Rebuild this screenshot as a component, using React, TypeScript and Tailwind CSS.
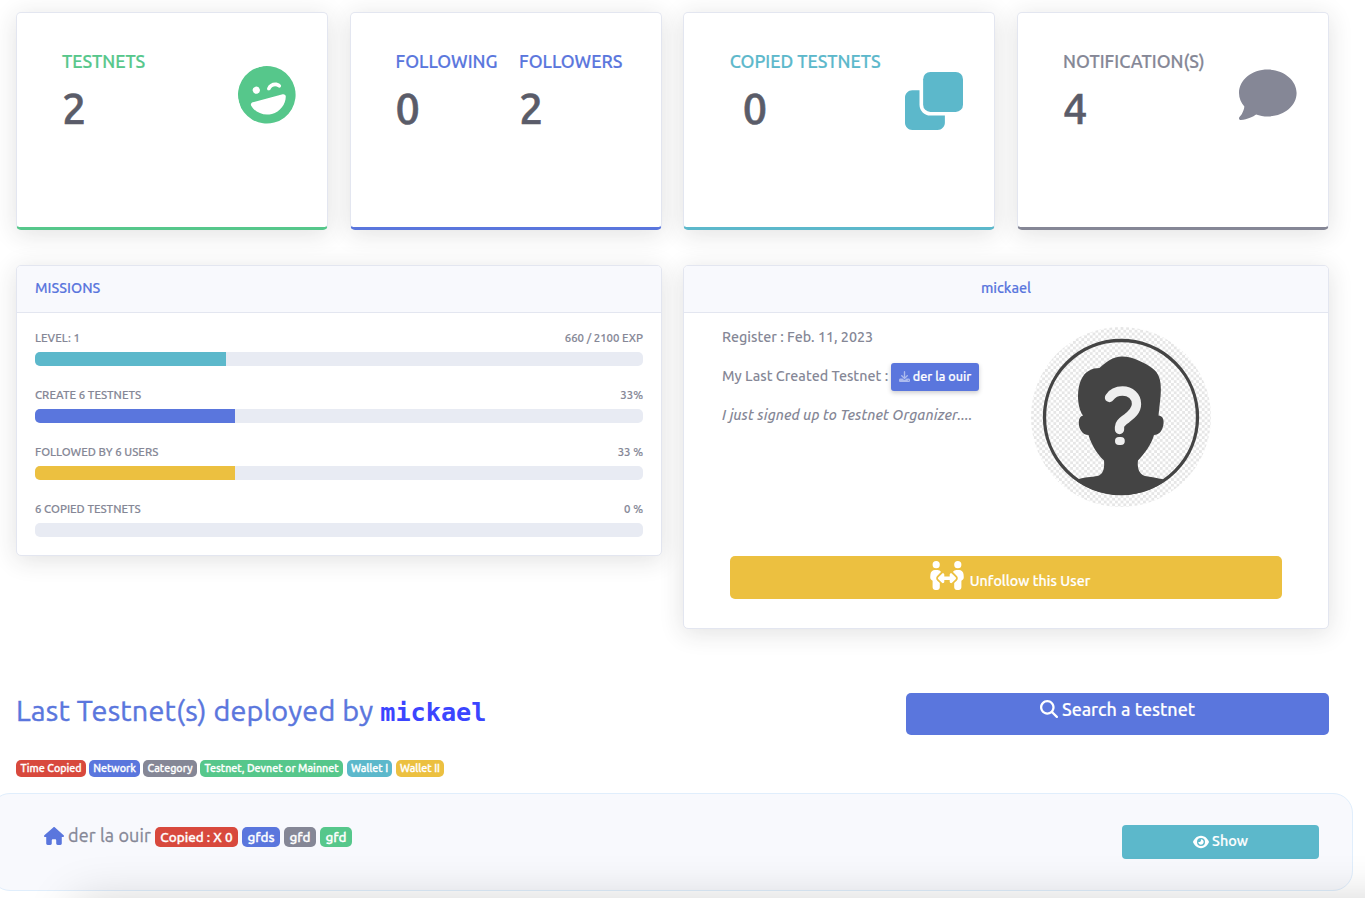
import type { ReactNode } from "react";
import {
  FaFaceLaughWink,
  FaComment,
  FaPeopleArrows,
  FaMagnifyingGlass,
  FaHouse,
  FaEye,
  FaDownload,
} from "react-icons/fa6";

const SHADOW = "shadow-[0_4px_25px_rgba(40,40,45,0.14)]";

function StatCard({ accent, children }: { accent: string; children: ReactNode }) {
  return (
    <div className={`flex h-[218px] rounded-[5px] border border-b-[3px] border-[#e3e6f0] bg-white ${SHADOW} ${accent}`}>
      {children}
    </div>
  );
}

function Stat({ label, value, color, valueClass = "" }: { label: string; value: string; color: string; valueClass?: string }) {
  return (
    <div className="whitespace-nowrap pt-[37px]">
      <div className={`text-[17.8px] leading-[22px] font-medium [-webkit-text-stroke:0.2px] ${color}`}>{label}</div>
      <div className={`mt-[10px] text-[43.2px] leading-[52px] font-medium [-webkit-text-stroke:0.6px] text-[#5a5c69] ${valueClass}`}>{value}</div>
    </div>
  );
}

function CloneIcon() {
  return (
    <svg viewBox="0 0 512 512" className="size-[58px]" fill="currentColor">
      <rect x="160" width="352" height="352" rx="64" />
      <path d="M0 224c0-35.300 28.700-64 64-64h64v128c0 53 43 96 96 96h128v64c0 35.300-28.700 64-64 64H64c-35.300 0-64-28.700-64-64z" />
    </svg>
  );
}

function Avatar() {
  return (
    <svg viewBox="0 0 180 180" className="size-[180px]">
      <defs>
        <pattern id="checks" width="5.600" height="5.600" patternUnits="userSpaceOnUse">
          <rect width="5.600" height="5.600" fill="#fff" />
          <rect width="2.800" height="2.800" fill="#e6e6e6" />
          <rect x="2.800" y="2.800" width="2.800" height="2.800" fill="#e6e6e6" />
        </pattern>
        <clipPath id="disc">
          <circle cx="90" cy="90" r="78" />
        </clipPath>
      </defs>
      <circle cx="90" cy="90" r="90" fill="url(#checks)" />
      <circle cx="90" cy="90" r="76.500" fill="none" stroke="#444" strokeWidth="3.300" />
      <path
        clipPath="url(#disc)"
        fill="#444"
        d="M46 152.500C56 149.500 64 150 68 148.500C73 146 73.500 140 73 133.500C66 127 60 117 57.500 108C51 108 47.500 101 47.800 95C48 91 49.500 89 52 88.500C46 80 45.500 63 50 53C54 44 61 41 68.500 41C75 35 82 29.500 91 29.500C102 29.500 114 36 121 41C130 47 130.500 58 129.500 70L127.500 88.500C131.500 89 133 92 132.500 97C131.500 104 128 108 123 108C120 118 114 126 107 133.500C106 141 108 147 114 149C120 150 126 151 133 152.500L130 180H50Z"
      />
      <path
        d="M78.500 70.500C81.500 66 86.500 64 91.500 64C99.500 64 105.500 69.500 105.500 77C105.500 84 100 88 95.500 91.500C91 95 88.500 96.500 88.500 100V102.500"
        fill="none"
        stroke="#efefef"
        strokeWidth="9.300"
        strokeLinecap="round"
        strokeLinejoin="round"
      />
      <rect x="84" y="110" width="9.800" height="8" rx="4" fill="#efefef" />
    </svg>
  );
}

const missions = [
  { label: "LEVEL: 1", value: "660 / 2100 EXP", width: "w-[191px]", color: "bg-[#5cb8cb]" },
  { label: "CREATE 6 TESTNETS", value: "33%", width: "w-[200px]", color: "bg-[#5a76dd]" },
  { label: "FOLLOWED BY 6 USERS", value: "33 %", width: "w-[200px]", color: "bg-[#ecc040]" },
  { label: "6 COPIED TESTNETS", value: "0 %", width: "w-0", color: "bg-[#5a76dd]" },
];

const legend = [
  { label: "Time Copied", style: "w-[70px] bg-[#d8493d]" },
  { label: "Network", style: "w-[51px] bg-[#5a76dd]" },
  { label: "Category", style: "w-[54px] bg-[#858796]" },
  { label: "Testnet, Devnet or Mainnet", style: "w-[143px] bg-[#56c78b]" },
  { label: "Wallet I", style: "w-[45px] ml-[1px] bg-[#5cb8cb]" },
  { label: "Wallet II", style: "w-[48px] ml-[1px] bg-[#ecc040]" },
];

const tags = [
  { label: "Copied : X 0", style: "w-[83px] bg-[#d8493d]" },
  { label: "gfds", style: "w-[38px] bg-[#5a76dd]" },
  { label: "gfd", style: "w-[32px] bg-[#858796]" },
  { label: "gfd", style: "w-[32px] bg-[#56c78b]" },
];

export default function App() {
  return (
    <div className="relative h-[898px] w-[1365px] overflow-hidden bg-white pt-[12px] font-['Ubuntu','Noto_Sans',sans-serif] text-[#858796]">
      <div className="ml-[16px] grid w-[1313px] grid-cols-[312px_312px_312px_312px] gap-x-[21.6px]">
        <StatCard accent="border-b-[#56c78b]">
          <div className="flex w-full justify-between pl-[45px] pr-[31.500px]">
            <Stat label="TESTNETS" value="2" color="text-[#56c78b]" />
            <FaFaceLaughWink className="mt-[52.500px] size-[57.600px] -rotate-15 text-[#56c78b]" />
          </div>
        </StatCard>
        <StatCard accent="border-b-[#5a76dd]">
          <div className="flex pl-[45px]">
            <div className="w-[123.500px]">
              <Stat label="FOLLOWING" value="0" color="text-[#5a76dd]" />
            </div>
            <Stat label="FOLLOWERS" value="2" color="text-[#5a76dd]" />
          </div>
        </StatCard>
        <StatCard accent="border-b-[#5cb8cb]">
          <div className="flex w-full justify-between pl-[45.500px] pr-[31.500px]">
            <Stat label="COPIED TESTNETS" value="0" color="text-[#5cb8cb]" valueClass="pl-[13px]" />
            <div className="pt-[59px] text-[#5cb8cb]">
              <CloneIcon />
            </div>
          </div>
        </StatCard>
        <StatCard accent="border-b-[#858796]">
          <div className="flex w-full justify-between pl-[45.200px] pr-[31px]">
            <Stat label="NOTIFICATION(S)" value="4" color="text-[#858796]" />
            <FaComment className="mt-[52.500px] size-[57.600px]" />
          </div>
        </StatCard>
      </div>

      <div className="ml-[16px] mt-[35px] grid w-[1313px] grid-cols-2 items-start gap-x-[21px]">
        <section className={`h-[291px] rounded-[5px] border border-[#e3e6f0] bg-white ${SHADOW}`}>
          <h2 className="flex h-[47px] items-center rounded-t-[4px] border-b border-[#e3e6f0] bg-[#f8f9fd] pl-[18px] text-[14.3px] font-medium text-[#5a76dd] [-webkit-text-stroke:0.15px]">
            MISSIONS
          </h2>
          <div className="flex flex-col gap-[21px] px-[18px] pt-[17px]">
            {missions.map((m) => (
              <div key={m.label} className="h-[36px]">
                <div className="flex h-[16px] items-center justify-between text-[11.4px] font-medium [-webkit-text-stroke:0.15px]">
                  <span>{m.label}</span>
                  <span>{m.value}</span>
                </div>
                <div className="mt-[6px] h-[14px] overflow-hidden rounded-[5px] bg-[#e8ebf3]">
                  <div className={`h-full ${m.width} ${m.color}`} />
                </div>
              </div>
            ))}
          </div>
        </section>

        <section className={`h-[364px] rounded-[5px] border border-[#e3e6f0] bg-white ${SHADOW}`}>
          <h2 className="flex h-[47px] items-center justify-center rounded-t-[4px] border-b border-[#e3e6f0] bg-[#f8f9fd] text-[14.4px] font-medium text-[#5a76dd] [-webkit-text-stroke:0.15px]">
            mickael
          </h2>
          <div className="flex h-[243px] pl-[38px] pt-[14px]">
            <div className="w-[309px] whitespace-nowrap text-[14.3px] leading-[21px] font-medium">
              <p>Register : Feb. 11, 2023</p>
              <div className="mt-[15px] flex h-[28px] items-center">
                <span className="w-[169px] pb-[2px]">My Last Created Testnet :</span>
                <span className="flex h-[28px] w-[88px] items-center justify-center gap-[3px] rounded-[3px] bg-[#5a76dd] pb-px text-[12.600px] font-medium text-white shadow-[0_2px_4px_rgba(58,59,69,0.25)] [-webkit-text-stroke:0.2px]">
                  <FaDownload className="size-[11px] opacity-50" />
                  der la ouir
                </span>
              </div>
              <p className="mt-[14px] text-[14.400px] tracking-[0.09px] italic">I just signed up to Testnet Organizer....</p>
            </div>
            <Avatar />
          </div>
          <button className="ml-[46px] flex h-[43px] w-[552px] items-start justify-center gap-[5px] rounded-[5px] bg-[#ecc040] pl-[7px] text-[14.300px] text-white">
            <FaPeopleArrows className="mt-[5px] h-[29px] w-[36px]" />
            <span className="mt-[15px] font-medium [-webkit-text-stroke:0.2px]">Unfollow this User</span>
          </button>
        </section>
      </div>

      <div className="ml-[16px] mt-[64px] flex h-[42px] w-[1313px] justify-between">
        <h1 className="-mt-px flex items-baseline gap-[7px] whitespace-nowrap text-[28.800px] leading-[36px] font-normal tracking-[0.18px] text-[#5a76dd] [-webkit-text-stroke:0.45px]">
          Last Testnet(s) deployed by
          <span className="font-['DejaVu_Sans_Mono',monospace] text-[25.200px] font-bold tracking-normal text-[#3b45ff] [-webkit-text-stroke:0px]">mickael</span>
        </h1>
        <button className="flex h-[42px] w-[423px] items-start justify-center gap-[4px] rounded-[5px] bg-[#5a76dd] pt-[4px] text-[17.900px] leading-[24px] font-medium text-white [-webkit-text-stroke:0.15px]">
          <FaMagnifyingGlass className="mt-[3px] size-[18px]" />
          Search a testnet
        </button>
      </div>

      <div className="ml-[16px] mt-[25px] flex h-[17px] gap-[3px]">
        {legend.map((b) => (
          <span key={b.label} className={`flex items-center justify-center whitespace-nowrap rounded-[5px] text-[10.700px] font-medium text-white [-webkit-text-stroke:0.3px] ${b.style}`}>
            {b.label}
          </span>
        ))}
      </div>

      <div className="-ml-[10px] mt-[16px] flex h-[98px] w-[1363px] justify-between rounded-[20px] border border-[#e0eefc] bg-[#f8f9fd] pl-[53px] pr-[33px]">
        <div className="mt-[31px] flex h-[24px] items-center gap-[4px]">
          <FaHouse className="mb-[3px] size-[20px] text-[#5a76dd]" />
          <span className="mb-[3px] w-[83px] whitespace-nowrap text-[18px] tracking-[0.12px] [-webkit-text-stroke:0.3px]">der la ouir</span>
          {tags.map((t, i) => (
            <span key={i} className={`flex h-[20px] items-center justify-center whitespace-nowrap rounded-[5px] text-[13.500px] font-medium text-white [-webkit-text-stroke:0.3px] ${t.style}`}>
              {t.label}
            </span>
          ))}
        </div>
        <button className="mt-[31px] flex h-[34px] w-[197px] items-center justify-center gap-[3px] rounded-[4px] bg-[#5cb8cb] pb-px text-[14.400px] font-medium text-white [-webkit-text-stroke:0.2px]">
          <FaEye className="size-[16px]" />
          Show
        </button>
      </div>
      <div className="absolute top-[904px] left-[75px] h-[60px] w-[1400px] shadow-[0_0_50px_rgba(0,0,0,0.2)]" />
    </div>
  );
}
